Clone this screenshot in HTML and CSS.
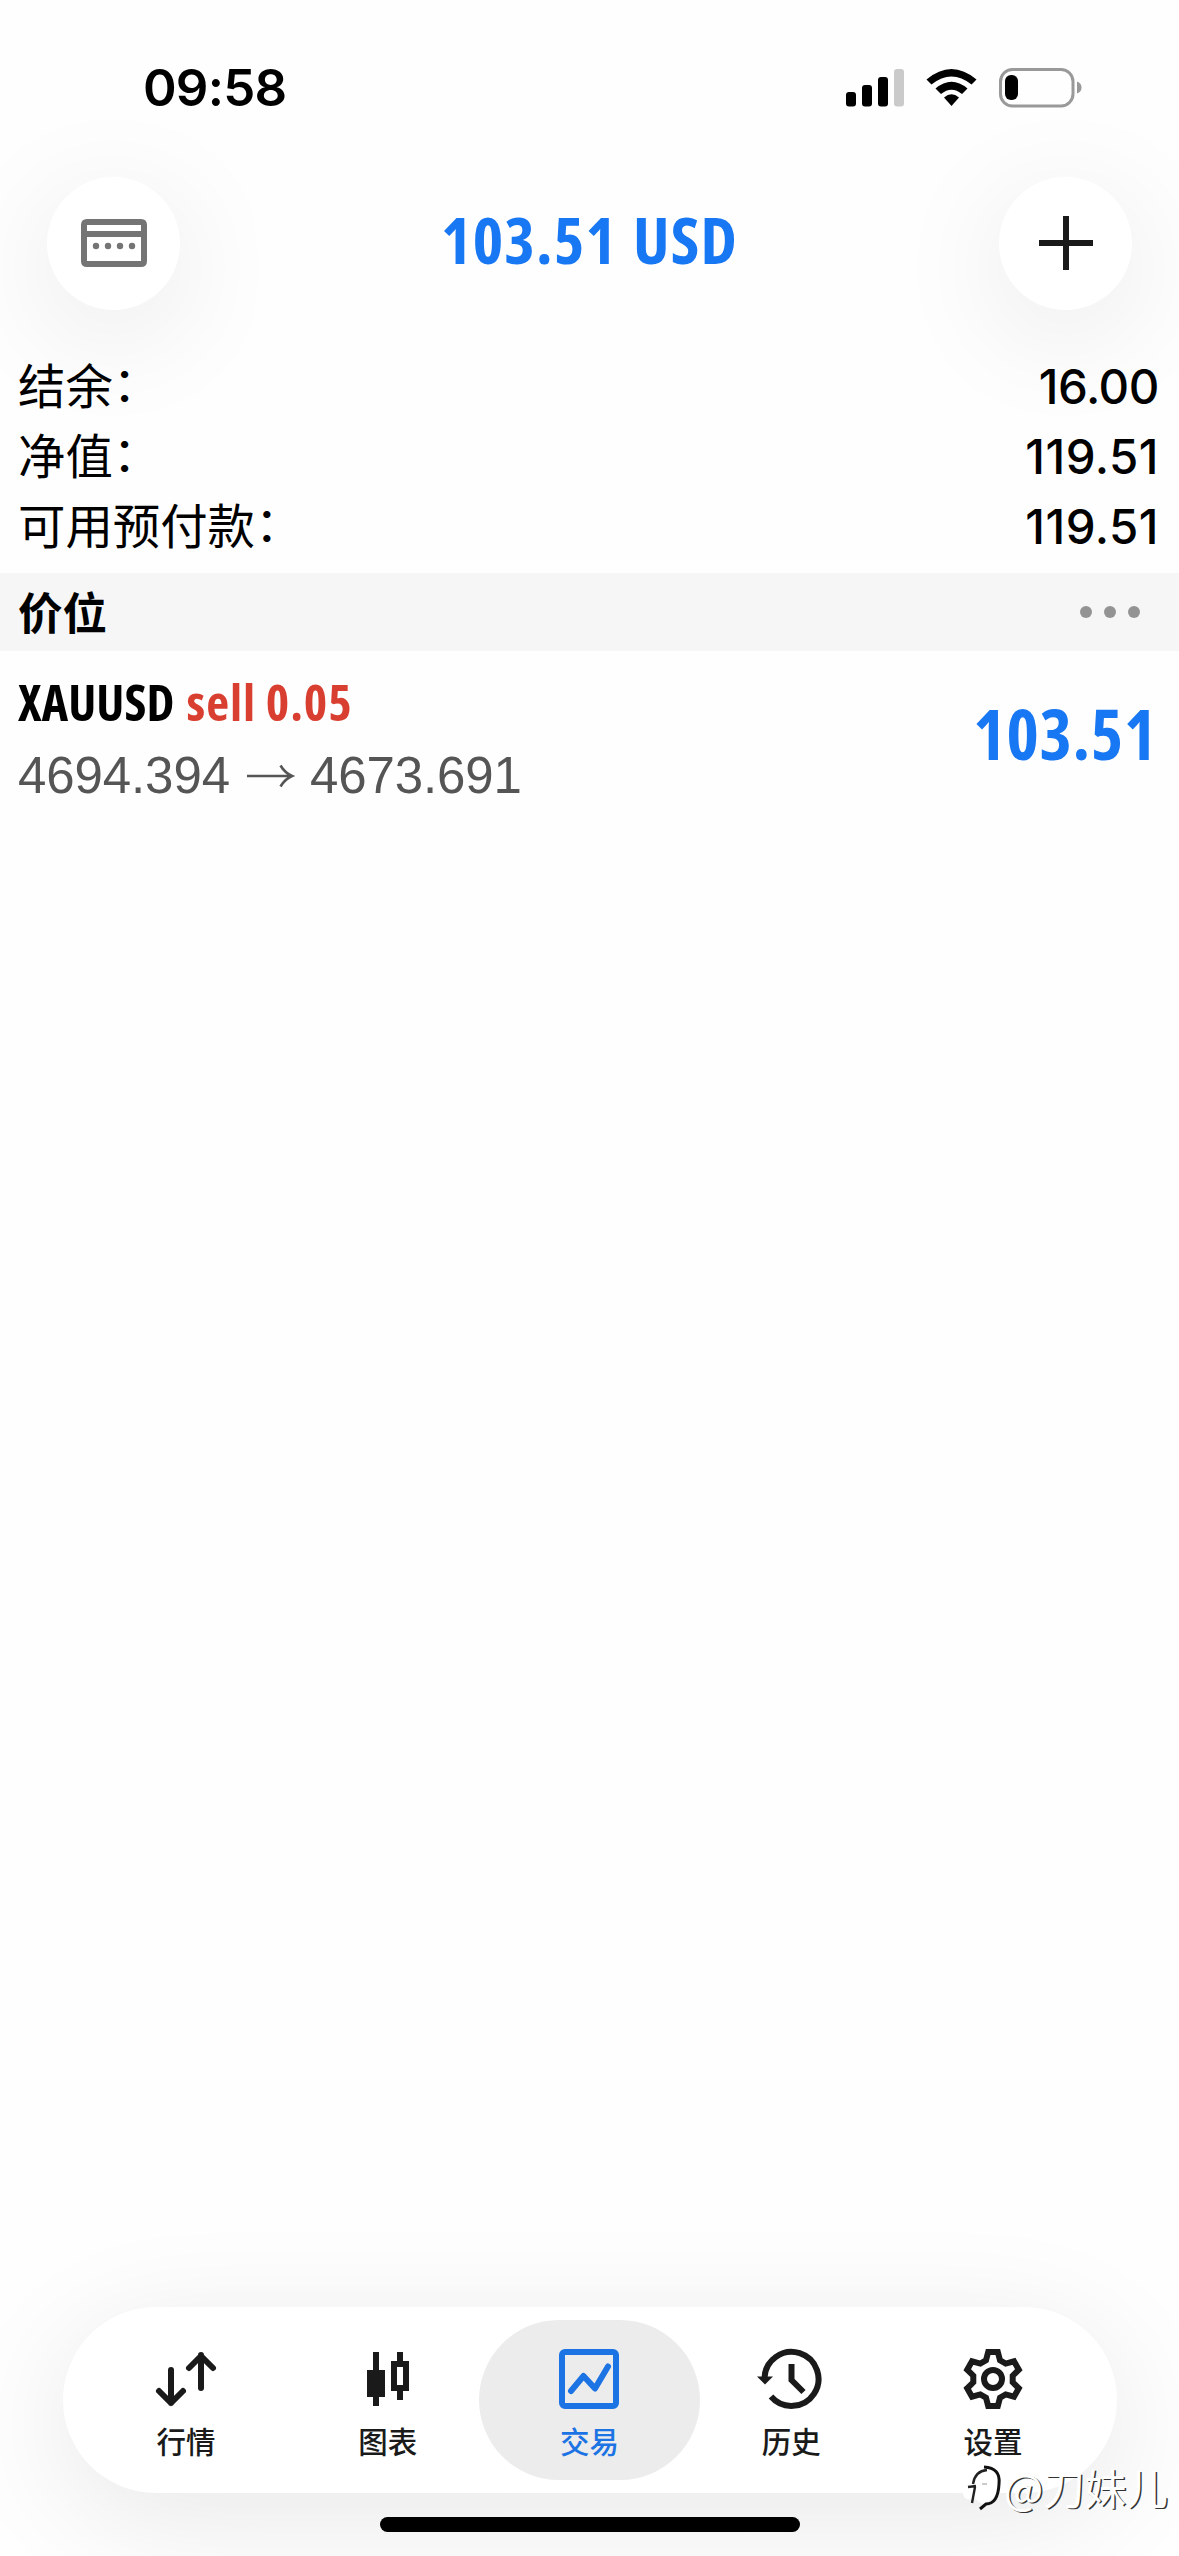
FILE: index.html
```html
<!DOCTYPE html>
<html lang="zh-CN">
<head>
<meta charset="utf-8">
<title>交易</title>
<link rel="stylesheet" href="styles.css">
</head>
<body>
<div class="screen">
  <header class="status">
    <span class="time">09:58</span>
    <svg class="status-icons" width="236" height="40" viewBox="846 68 236 40">
      <rect x="846" y="92" width="10" height="14.500" rx="3"/>
      <rect x="862" y="85" width="10" height="21.500" rx="3"/>
      <rect x="878" y="77" width="10" height="29.500" rx="3"/>
      <rect x="894" y="69" width="10" height="37.500" rx="3" fill="#cacaca"/>
      <path d="M926.500 79.500Q951.500 58.500 976.500 79.500L971.500 84.500Q951.500 68.500 931.500 84.500Z"/>
      <path d="M935.500 88.500Q951.500 75 967.500 88.500L962 94Q951.500 85.500 941 94Z"/>
      <path d="M944 97.500Q951.500 91 959 97.500L951.500 106Z"/>
      <rect x="1000.500" y="69.500" width="72.500" height="36.500" rx="12" fill="none" stroke="#999" stroke-width="3"/>
      <rect x="1005" y="75" width="13" height="25" rx="6"/>
      <path d="M1077 81.500Q1081.500 83 1081.500 87.500T1077 93.500Z" fill="#999"/>
    </svg>
  </header>

  <nav class="toolbar">
    <button class="round" aria-label="账户">
      <svg width="66" height="48" viewBox="0 0 66 48" fill="#747474">
        <path fill-rule="evenodd" d="M6 0H60Q66 0 66 6V42Q66 48 60 48H6Q0 48 0 42V6Q0 0 6 0ZM6 6V12H60V6ZM6 18V42H60V18Z"/>
        <circle cx="15" cy="27" r="3.200"/><circle cx="27" cy="27" r="3.200"/><circle cx="39" cy="27" r="3.200"/><circle cx="51" cy="27" r="3.200"/>
      </svg>
    </button>
    <h1 class="title condensed">103.51 USD</h1>
    <button class="round" aria-label="新建">
      <svg width="54" height="54" viewBox="0 0 54 54" fill="#1a1a1a"><path d="M24 0h6v24h24v6H30v24h-6V30H0v-6h24z"/></svg>
    </button>
  </nav>

  <dl class="account">
    <div class="row"><dt>结余<span class="colon">：</span></dt><dd>16.00</dd></div>
    <div class="row"><dt>净值<span class="colon">：</span></dt><dd class="wide">119.51</dd></div>
    <div class="row"><dt>可用预付款<span class="colon">：</span></dt><dd class="wide">119.51</dd></div>
  </dl>

  <section class="section-head">
    <h2>价位</h2>
    <span class="dots"><i></i><i></i><i></i></span>
  </section>

  <article class="position">
    <div class="deal">
      <p class="order condensed"><span class="symbol">XAUUSD</span><span class="sell">sell 0.05</span></p>
      <p class="prices"><span>4694.394</span><svg width="46" height="24" viewBox="0 0 46 24"><path d="M0 12H44M33.500 1.500Q38 9 45 12Q38 15 33.500 22.500" fill="none" stroke="#555" stroke-width="2.600"/></svg><span>4673.691</span></p>
    </div>
    <span class="profit condensed">103.51</span>
  </article>

  <footer class="bottom">
    <nav class="tabs">
      <a class="tab">
        <svg width="60" height="60" viewBox="0 0 60 60" class="line round-line"><path d="M15 21V54M3 42L15 54L27 42M45 39V6M33 19L45 7L57 19"/></svg>
        <span>行情</span>
      </a>
      <a class="tab">
        <svg width="60" height="60" viewBox="0 0 60 60"><path fill="#1a1a1a" fill-rule="evenodd" d="M15 3h6v18h6v27h-6v9h-6v-9H9V21h6zM39 3h6v9h6v30h-6v9h-6v-9h-6V12h6zM39 18v18h6V18z"/></svg>
        <span>图表</span>
      </a>
      <a class="tab active">
        <svg width="60" height="60" viewBox="0 0 60 60" class="line round-line"><rect x="3" y="3" width="54" height="54" rx="3"/><path d="M12 42L24.500 27L36 39.500L49 17.500"/></svg>
        <span>交易</span>
      </a>
      <a class="tab">
        <svg width="70" height="60" viewBox="-4 0 70 60" class="line"><path d="M4.500 29A27 27 0 1 1 11 47.500M31.500 15V31L43.500 43"/><path class="solid" d="M-3 27.500H13L5 35.500Z"/></svg>
        <span>历史</span>
      </a>
      <a class="tab">
        <svg width="60" height="60" viewBox="-30 -30 60 60" class="line"><path d="M-7-18.700L-4.800-27H4.800L7-18.700L12.700-15.400L21-17.700L25.800-9.300L19.700-3.300V3.300L25.800 9.300L21 17.700L12.700 15.400L7 18.700L4.800 27H-4.800L-7 18.700L-12.700 15.400L-21 17.700L-25.800 9.300L-19.700 3.300V-3.300L-25.800-9.300L-21-17.700L-12.700-15.400Z"/><circle r="9"/></svg>
        <span>设置</span>
      </a>
    </nav>
    <div class="home"></div>
    <div class="watermark">
      <svg width="44" height="50" viewBox="0 0 44 50"><path d="M2 24Q8 4 26 4Q40 6 40 20Q40 36 22 42L14 36Q2 42 2 24Z" fill="#fff"/><path d="M12 41L15 25M8 25L16 24M13 22Q15 9 27 8" fill="none" stroke="#222" stroke-width="2.400"/><path d="M24 5Q41 6 39 22Q38 42 26 42L20 47" fill="none" stroke="#111" stroke-width="3"/><path d="M22 22H27" stroke="#999" stroke-width="1"/></svg>
      <span>@刀妹儿</span>
    </div>
  </footer>
</div>
</body>
</html>
```
FILE: styles.css
```css
* { box-sizing: border-box; }

body {
  margin: 0;
  background: #fefefe;
  color: #000;
  font-family: Inter, "Noto Sans CJK SC", sans-serif;
}

svg { display: block; overflow: visible; flex: none; }

.screen {
  width: 1179px;
  height: 2556px;
  overflow: hidden;
  display: flex;
  flex-direction: column;
}

.status {
  height: 177px;
  padding: 57px 97px 0 143px;
  display: flex;
  justify-content: space-between;
  align-items: flex-start;
}

.time { font-size: 51px; line-height: 62px; font-weight: 600; letter-spacing: -.8px; }
.status-icons { margin-top: 11px; }

.toolbar {
  height: 132px;
  padding: 0 47px;
  display: flex;
  justify-content: space-between;
  align-items: center;
}

.round {
  width: 133px;
  height: 133px;
  padding: 0;
  border: 0;
  border-radius: 50%;
  background: #fff;
  box-shadow: 0 24px 120px rgba(0, 0, 0, .09);
  display: grid;
  place-items: center;
}

.condensed {
  margin: 0;
  font-family: "Open Sans", sans-serif;
  font-stretch: 77%;
  font-weight: 660;
  color: #1877f2;
  white-space: nowrap;
}
.title { height: 96px; font-size: 65px; line-height: 88px; letter-spacing: 1.200px; word-spacing: 3px; }

.account { margin: 0; padding: 43px 20px 0 18px; height: 264px; }
.row { display: flex; justify-content: space-between; height: 70px; line-height: 70px; font-size: 47.400px; }
.row dt { font-family: "Noto Sans CJK SC", sans-serif; line-height: 64px; }
.row dd { margin: 0; font-weight: 500; letter-spacing: -.4px; }
.row dd.wide { letter-spacing: .5px; }
.colon { display: inline-block; transform: translate(0, -3px); }

.section-head {
  height: 78px;
  padding: 0 39px 0 18px;
  background: #f6f6f6;
  display: flex;
  justify-content: space-between;
  align-items: center;
}
.section-head h2 { margin: 0; font: 700 44.500px/76px "Noto Sans CJK SC", sans-serif; height: 78px; }
.dots { display: flex; gap: 12px; }
.dots i { width: 12px; height: 12px; border-radius: 50%; background: #939393; }

.position {
  height: 180px;
  padding: 21px 22px 0 18px;
  display: flex;
  justify-content: space-between;
}
.order { display: flex; gap: 12px; font-size: 50px; line-height: 60px; }
.order .symbol { color: #000; font-weight: 700; letter-spacing: .1px; }
.order .sell { color: #d93f31; letter-spacing: .9px; }
.prices {
  margin: 14px 0 0;
  display: flex;
  align-items: center;
  gap: 17px;
  height: 60px;
  font: 51px/60px "Liberation Sans", Arial, sans-serif;
  letter-spacing: -.1px;
  color: #555;
}
.profit { margin-top: 16px; height: 90px; font-size: 69px; line-height: 90px; letter-spacing: .7px; }

.bottom {
  position: relative;
  margin-top: auto;
  height: 249px;
}
.tabs {
  width: 1054px;
  height: 186px;
  margin: 0 auto 0 63px;
  padding: 13px 13px 13px 12px;
  border-radius: 93px;
  background: #fff;
  box-shadow: 0 24px 120px rgba(0, 0, 0, .09);
  display: flex;
  justify-content: space-between;
}
.tab {
  width: 222px;
  height: 160px;
  margin-right: -20px;
  padding-top: 29px;
  border-radius: 80px;
  display: flex;
  flex-direction: column;
  align-items: center;
  gap: 9px;
  font: 500 29.500px/44px "Noto Sans CJK SC", sans-serif;
  color: #1a1a1a;
}
.tab:last-child { margin-right: 0; }
.tab.active { background: #ececec; color: #1c73e3; }

.line { fill: none; stroke: currentColor; stroke-width: 6; }
.round-line { stroke-linecap: round; stroke-linejoin: round; }
.solid { fill: currentColor; stroke: none; }

.home { width: 420px; height: 15px; margin: 24px auto 0; border-radius: 8px; background: #000; }

.watermark {
  position: absolute;
  left: 960px;
  top: 152px;
  display: flex;
  align-items: center;
  font: 41.500px/56px "Noto Sans CJK SC", sans-serif;
  color: #fff;
  text-shadow: 1.500px 1px 0 #333;
}
```
